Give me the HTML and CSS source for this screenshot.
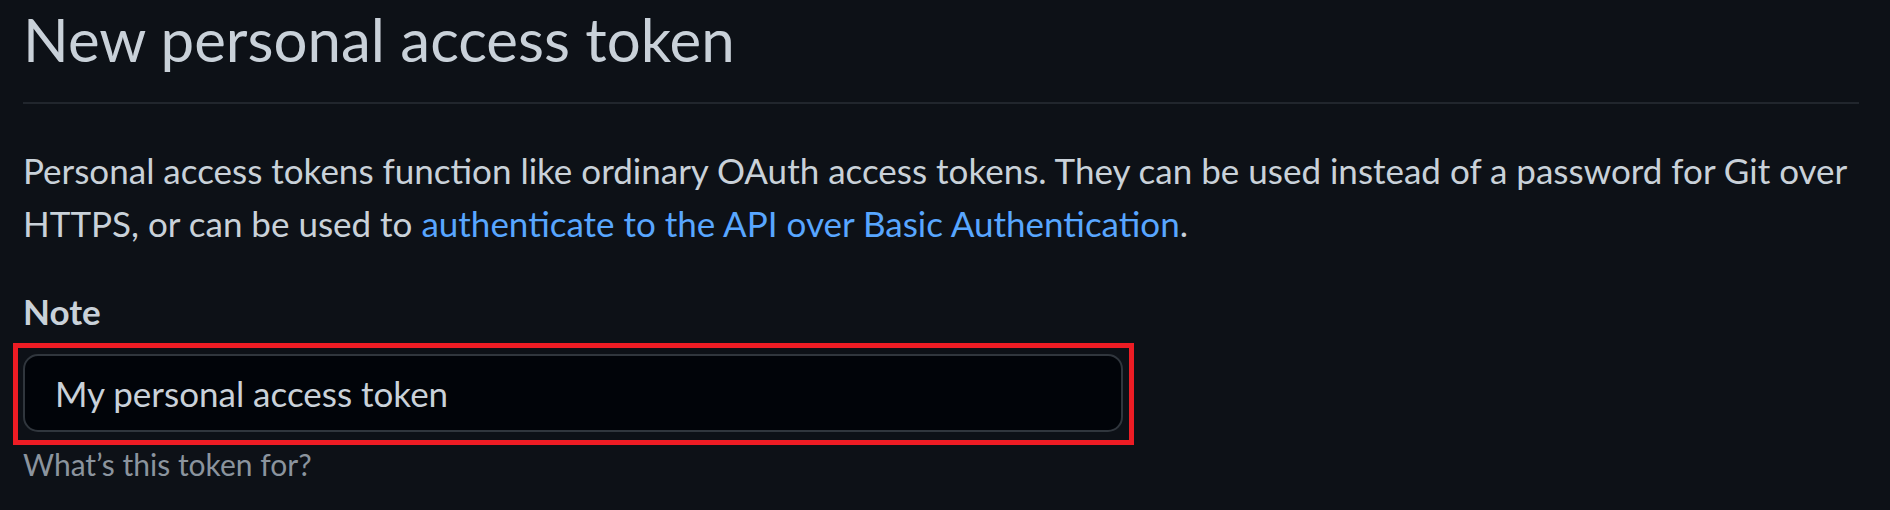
FILE: index.html
```html
<!DOCTYPE html>
<html lang="en">
<head>
<meta charset="utf-8">
<title>New personal access token</title>
<link rel="stylesheet" href="styles.css">
</head>
<body>
<main class="page">
  <div class="subhead">
    <h2 class="subhead-heading">New personal access token</h2>
  </div>
  <p class="intro">Personal access tokens function like ordinary OAuth access tokens. They can be used instead of a password for Git over HTTPS, or can be used to <a href="#" class="link">authenticate to the API over Basic Authentication</a>.</p>
  <div class="form-group">
    <label class="label" for="note">Note</label>
    <div class="field">
      <input id="note" class="form-control" type="text" value="My personal access token">
      <span class="highlight"></span>
    </div>
    <p class="note">What’s this token for?</p>
  </div>
</main>
</body>
</html>
```

FILE: styles.css
```css
html, body {
  margin: 0;
  padding: 0;
  background: #0d1117;
}

body {
  font-family: Lato, "Noto Sans", sans-serif;
  color: #c9d1d9;
}

.page {
  margin-left: 23px;
  width: 1836px;
}

.subhead {
  padding-top: 3px;
  padding-bottom: 27px;
  border-bottom: 2px solid #21262d;
}

.subhead-heading {
  margin: 0;
  font-size: 60px;
  font-weight: 400;
  line-height: 72px;
  color: #c9d1d9;
}

.intro {
  margin: 40px 0 0 0;
  font-size: 35px;
  line-height: 52.5px;
}

.link {
  color: #58a6ff;
  text-decoration: none;
}

.form-group {
  margin-top: 36px;
}

.label {
  display: block;
  font-size: 35px;
  line-height: 52.5px;
  font-weight: 700;
}

.field {
  position: relative;
  margin-top: 16px;
  width: 1100px;
}

.form-control {
  display: block;
  box-sizing: border-box;
  width: 1100px;
  height: 78px;
  margin: 0;
  padding: 0 30px;
  font-family: inherit;
  font-size: 35px;
  line-height: 52.5px;
  color: #c9d1d9;
  background: #010409;
  border: 2px solid #30363d;
  border-radius: 15px;
  outline: none;
}

.highlight {
  position: absolute;
  top: -11px;
  left: -10px;
  right: -11px;
  bottom: -13px;
  border: 5px solid #ed1c24;
  pointer-events: none;
}

.note {
  margin: 10px 0 0 0;
  font-size: 30px;
  line-height: 45px;
  color: #8b949e;
}
```
